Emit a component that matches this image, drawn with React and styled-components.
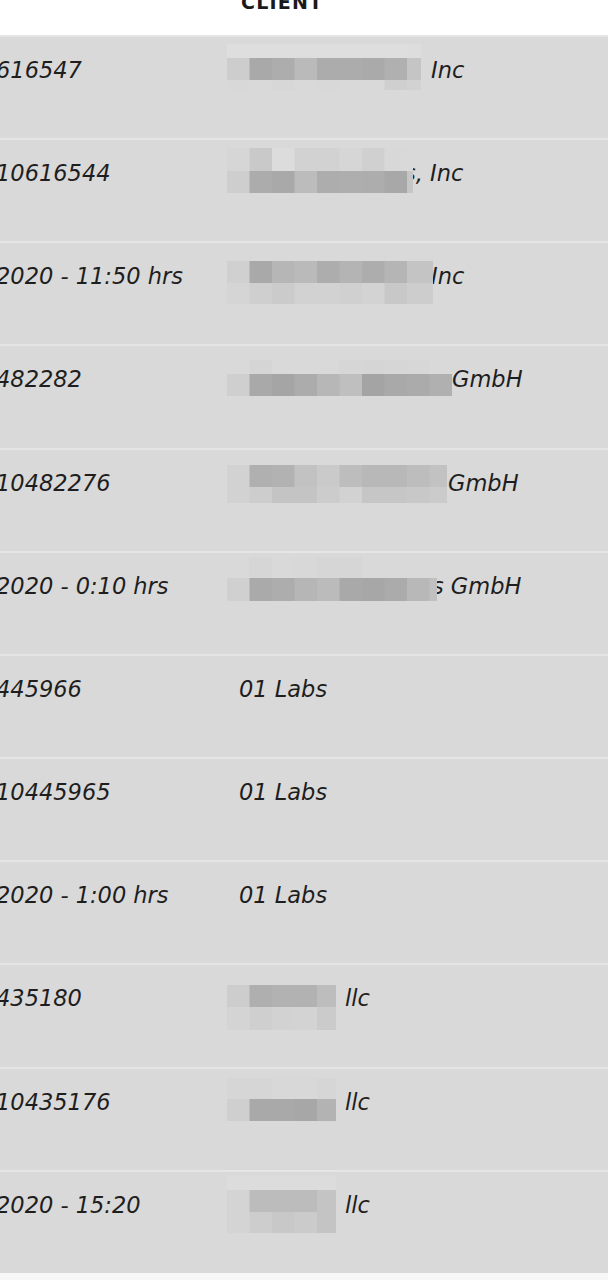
import React from "react";
import styled, { createGlobalStyle } from "styled-components";

const GlobalStyle = createGlobalStyle`
  html, body {
    margin: 0;
    padding: 0;
    background: #f7f7f7;
    overflow: hidden;
  }
`;

const Page = styled.div`
  width: calc(100% + 4px);
  margin: -20px 0 0 -4px;
  font-family: "DejaVu Sans", "Liberation Sans", sans-serif;
  color: #1e1e1e;
`;

const Head = styled.div`
  display: grid;
  grid-template-columns: 243px 1fr;
  height: 55px;
  background: #fff;
`;

const HeadCell = styled.div`
  margin: 12px 0 0 2px;
  font-size: 19px;
  line-height: 20px;
  font-weight: 700;
  letter-spacing: 1.2px;
  text-transform: uppercase;
  color: #1a1a1a;
`;

const Row = styled.div`
  display: grid;
  grid-template-columns: 243px 1fr;
  box-sizing: border-box;
  height: 103.17px;
  border-top: 2px solid #e5e5e5;
  background: #d9d9d9;
`;

const Cell = styled.div`
  display: flex;
  align-items: flex-start;
  white-space: nowrap;
  min-width: 0;
`;

const Text = styled.span`
  margin-top: 20px;
  margin-left: ${(p) => p.$offset || 0}px;
  font-size: 22.5px;
  line-height: 26px;
  font-style: italic;
`;

const MosaicSvg = styled.svg`
  position: relative;
  z-index: 1;
  flex-shrink: 0;
  display: block;
  margin-left: -12px;
  margin-top: ${(p) => p.$top - 2}px;
`;

const CW = 22.5;

function Mosaic({ m }) {
  const height = m.rows.reduce((s, r) => s + r.h, 0);
  let y = 0;
  return (
    <MosaicSvg width={m.width} height={height} $top={m.top}>
      {m.rows.map((r, i) => {
        const y0 = y;
        y += r.h;
        return r.c.map((fill, j) => (
          <rect key={i + "-" + j} x={j * CW} y={y0} width={CW + 0.5} height={r.h + 0.5} fill={fill} />
        ));
      })}
    </MosaicSvg>
  );
}

const g = (v) => `#${v}${v}${v}`;
const line = (h, vals) => ({ h, c: vals.map(g) });

const mosaics = {
  m1: {
    top: 9, width: 194,
    rows: [
      line(14, ["de", "de", "de", "de", "de", "de", "de", "de", "dd"]),
      line(22, ["cd", "a9", "ad", "ba", "ac", "ac", "aa", "b0", "c5"]),
      line(10, ["d8", "d9", "d7", "d9", "d8", "d9", "d9", "cf", "d2"]),
    ],
  },
  m2: {
    top: 10, width: 186,
    rows: [
      line(23, ["d6", "c9", "dc", "d2", "d2", "d6", "d0", "d8", "d9"]),
      line(22, ["ce", "ac", "a9", "bc", "ad", "ae", "ad", "a8", "c6"]),
    ],
  },
  m3: {
    top: 20, width: 206,
    rows: [
      line(22, ["d0", "a9", "b6", "ba", "ad", "b4", "ad", "b5", "c4", "c4"]),
      line(21, ["d5", "cf", "cb", "d2", "d2", "d0", "d3", "c8", "cd", "cd"]),
    ],
  },
  m4: {
    top: 16, width: 225,
    rows: [
      line(14, ["d9", "d5", "d9", "d9", "d9", "d6", "d5", "d6", "d7", "d9"]),
      line(22, ["cf", "a9", "a5", "ac", "b7", "bf", "a4", "a9", "ab", "b0"]),
    ],
  },
  m5: {
    top: 17, width: 220,
    rows: [
      line(22, ["d2", "b0", "b2", "c2", "ca", "bd", "b8", "b8", "bd", "c2"]),
      line(16, ["d2", "cd", "c4", "c4", "cc", "d2", "c6", "c6", "c8", "cb"]),
    ],
  },
  m6: {
    top: 6, width: 210,
    rows: [
      line(21, ["d9", "d6", "d9", "d8", "d6", "d6", "d9", "d9", "d9", "d9"]),
      line(23, ["d0", "aa", "ad", "b6", "bb", "a9", "a7", "ab", "b8", "c0"]),
    ],
  },
  m10: {
    top: 22, width: 109,
    rows: [
      line(22, ["cd", "af", "b2", "b2", "bd"]),
      line(23, ["d4", "cf", "d2", "d3", "cb"]),
    ],
  },
  m11: {
    top: 11, width: 109,
    rows: [
      line(21, ["d6", "d6", "d8", "d8", "d6"]),
      line(22, ["cf", "a9", "a9", "a7", "b3"]),
    ],
  },
  m12: {
    top: 5, width: 109,
    rows: [
      line(15, ["dc", "dc", "dc", "dc", "dc"]),
      line(22, ["d4", "bc", "bc", "bc", "c4"]),
      line(21, ["d4", "cd", "c8", "cb", "c4"]),
    ],
  },
};

const rows = [
  { ref: "616547", mosaic: "m1", client: "Inc", offset: 10 },
  { ref: "10616544", mosaic: "m2", client: "s, Inc", offset: -9 },
  { ref: "2020 - 11:50 hrs", mosaic: "m3", client: "Inc", offset: -2 },
  { ref: "482282", mosaic: "m4", client: "GmbH", offset: 0 },
  { ref: "10482276", mosaic: "m5", client: "GmbH", offset: 1 },
  { ref: "2020 - 0:10 hrs", mosaic: "m6", client: "s GmbH", offset: -5 },
  { ref: "445966", client: "01 Labs" },
  { ref: "10445965", client: "01 Labs" },
  { ref: "2020 - 1:00 hrs", client: "01 Labs" },
  { ref: "435180", mosaic: "m10", client: "llc", offset: 9 },
  { ref: "10435176", mosaic: "m11", client: "llc", offset: 9 },
  { ref: "2020 - 15:20", mosaic: "m12", client: "llc", offset: 9 },
];

export default function App() {
  return (
    <>
      <GlobalStyle />
      <Page>
        <Head>
          <div />
          <HeadCell>Client</HeadCell>
        </Head>
        {rows.map((row, i) => (
          <Row key={i}>
            <Cell>
              <Text>{row.ref}</Text>
            </Cell>
            <Cell>
              {row.mosaic && <Mosaic m={mosaics[row.mosaic]} />}
              <Text $offset={row.offset}>{row.client}</Text>
            </Cell>
          </Row>
        ))}
      </Page>
    </>
  );
}
